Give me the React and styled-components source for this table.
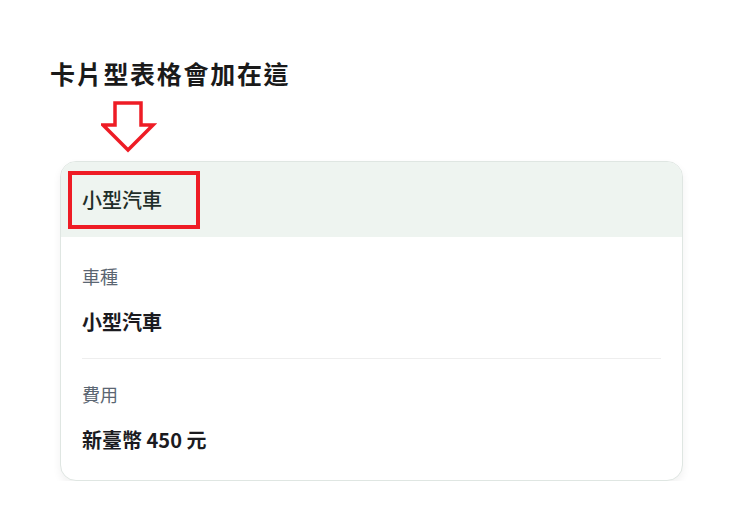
import React from "react";
import styled, { createGlobalStyle } from "styled-components";

const GlobalStyle = createGlobalStyle`
  body {
    margin: 0;
    background: #ffffff;
    font-family: "Noto Sans CJK TC", "Noto Sans", sans-serif;
  }
`;

const Page = styled.div`
  padding: 55px 55px 0 50px;
`;

const Title = styled.h2`
  margin: 0;
  font-size: 25px;
  line-height: 36px;
  font-weight: 700;
  letter-spacing: 1.7px;
  color: #1a1a1a;
`;

const ArrowWrap = styled.div`
  margin: 10px 0 8px 51px;
  height: 52px;
`;

const Card = styled.div`
  position: relative;
  margin-left: 10px;
  width: 623px;
  box-sizing: border-box;
  border: 1px solid #dfe6e2;
  border-radius: 16px;
  overflow: hidden;
  background: #ffffff;
  box-shadow: 0 4px 8px rgba(0, 0, 0, 0.06);
`;

const CardHeader = styled.div`
  position: relative;
  height: 75px;
  padding: 0 21px;
  display: flex;
  align-items: center;
  background: #eef4f0;
  font-size: 20px;
  font-weight: 500;
  color: #1f2e29;
`;

const Highlight = styled.div`
  position: absolute;
  left: 7px;
  top: 9px;
  width: 132px;
  height: 58px;
  box-sizing: border-box;
  border: 4px solid #ee1c25;
`;

const CardBody = styled.div`
  padding: 4px 21px 4px;
`;

const Field = styled.div`
  padding: 23px 0 22px;
  border-top: ${(p) => (p.$first ? "none" : "1px solid #eeeeee")};
`;

const Label = styled.div`
  font-size: 18px;
  line-height: 24px;
  color: #5b6672;
`;

const Value = styled.div`
  margin-top: 20px;
  font-size: 20px;
  line-height: 28px;
  font-weight: 700;
  color: #1b1b1f;
`;

const DownArrow = () => (
  <svg width="56" height="52" viewBox="0 0 56 52">
    <path
      d="M14 2 H40 V24 H52 L27 49 L2 24 H14 Z"
      fill="none"
      stroke="#ee1c25"
      strokeWidth="3.5"
      strokeLinejoin="miter"
    />
  </svg>
);

const fields = [
  { label: "車種", value: "小型汽車" },
  { label: "費用", value: "新臺幣 450 元" },
];

export default function App() {
  return (
    <>
      <GlobalStyle />
      <Page>
        <Title>卡片型表格會加在這</Title>
        <ArrowWrap>
          <DownArrow />
        </ArrowWrap>
        <Card>
          <CardHeader>
            小型汽車
            <Highlight />
          </CardHeader>
          <CardBody>
            {fields.map((f, i) => (
              <Field key={f.label} $first={i === 0}>
                <Label>{f.label}</Label>
                <Value>{f.value}</Value>
              </Field>
            ))}
          </CardBody>
        </Card>
      </Page>
    </>
  );
}
